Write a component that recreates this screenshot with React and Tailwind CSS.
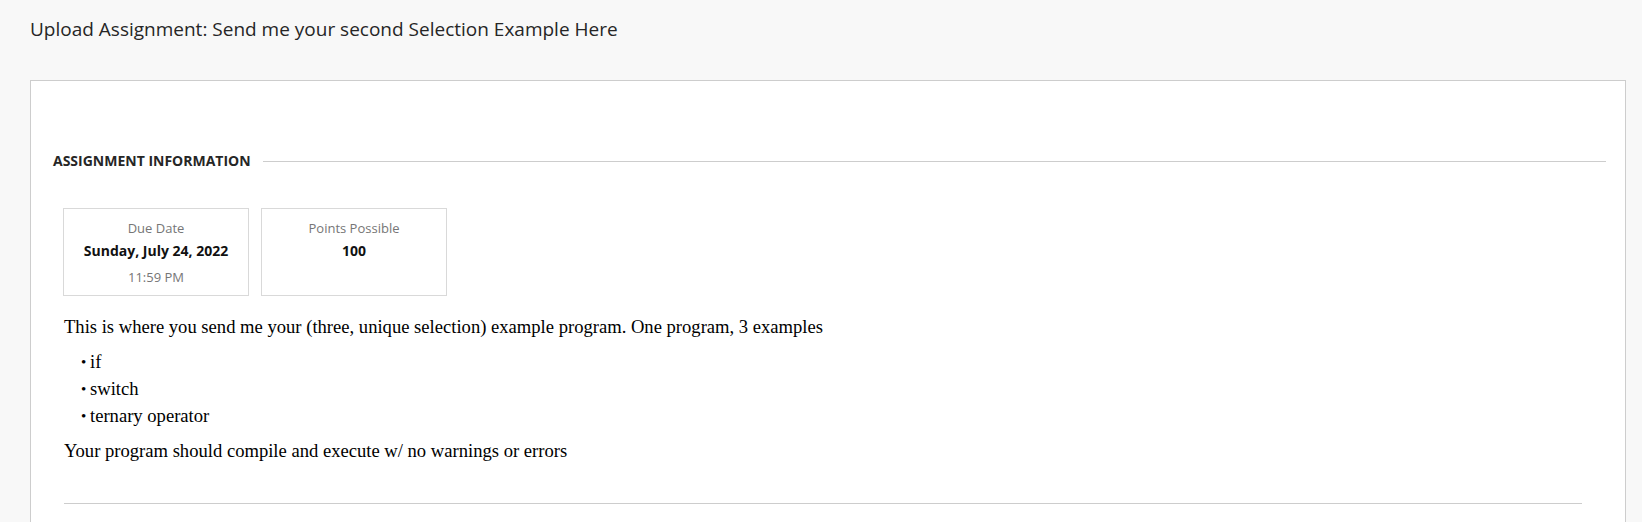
import React from 'react';

const InfoCard = ({ label, value, sub }) => (
    <div className="w-[186px] h-[88px] border border-[#d9d9d9] bg-white flex flex-col items-center pt-[10px]">
        <div className="text-[13px] leading-[18px] text-[#767676]">{label}</div>
        <div className="text-[14px] leading-[20px] mt-[4px] font-bold text-[#111]">{value}</div>
        {sub && <div className="text-[13px] leading-[18px] mt-[7px] text-[#767676]">{sub}</div>}
    </div>
);

const App = () => {
    const items = ['if', 'switch', 'ternary operator'];

    return (
        <div className="min-h-[522px] bg-[#f8f8f8] font-['Open_Sans',sans-serif] overflow-hidden">
            <h1 className="pl-[30px] pt-[16px] h-[80px] text-[19px] leading-[26px] text-[#262626] font-normal">
                Upload Assignment: Send me your second Selection Example Here
            </h1>

            <div className="ml-[30px] mr-[16px] h-[460px] bg-white border border-[#cdcdcd] border-b-0">
                <div className="flex items-center pl-[22px] pr-[19px] pt-[70px]">
                    <h2 className="text-[14px] leading-[20px] font-bold uppercase text-[#262626]">
                        Assignment Information
                    </h2>
                    <div className="flex-1 ml-[12px] border-t border-[#cdcdcd]" />
                </div>

                <div className="flex gap-[12px] pl-[32px] mt-[37px]">
                    <InfoCard label="Due Date" value="Sunday, July 24, 2022" sub="11:59 PM" />
                    <InfoCard label="Points Possible" value="100" />
                </div>

                <div className="pl-[33px] pr-[43px] font-['Liberation_Serif',serif] text-[18.6px] leading-[20px] text-black">
                    <p className="mt-[21px]">
                        This is where you send me your (three, unique selection) example program. One program, 3 examples
                    </p>
                    <ul className="mt-[15px] pl-[17px] space-y-[7px]">
                        {items.map((item) => (
                            <li key={item} className="flex items-center">
                                <span className="w-[9px] text-[15px] leading-[20px]">•</span>
                                <span>{item}</span>
                            </li>
                        ))}
                    </ul>
                    <p className="mt-[15px]">Your program should compile and execute w/ no warnings or errors</p>
                    <div className="mt-[42px] border-t border-[#cdcdcd]" />
                </div>
            </div>
        </div>
    );
};

export default App;
